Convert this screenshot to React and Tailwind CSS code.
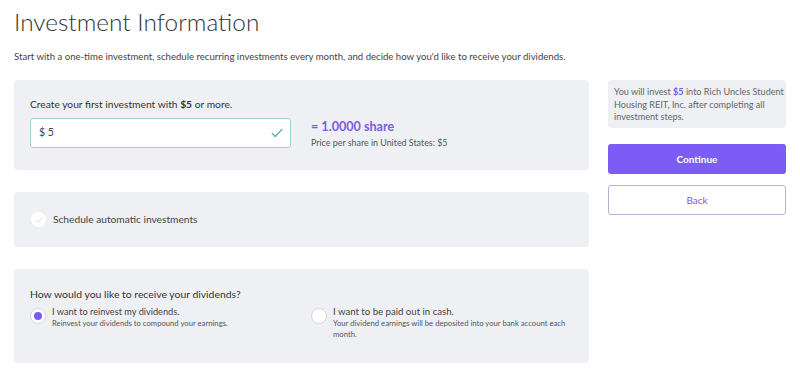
import React, { useState } from 'react';

const Check = ({ className }) => (
    <svg viewBox="0 0 16 16" className={className} fill="none" stroke="currentColor" strokeWidth="1.4" strokeLinecap="round" strokeLinejoin="round">
        <path d="M2.5 8.5l3.5 3.5 7.5-8" />
    </svg>
);

const App = () => {
    const [amount, setAmount] = useState('$ 5');
    const [payout, setPayout] = useState('reinvest');

    return (
        <div className="w-[800px] h-[377px] bg-white text-[#3b3b3b] overflow-hidden" style={{ fontFamily: 'Lato, "Open Sans", sans-serif' }}>
            <div className="pl-[14px] pt-[6px]">
                <h1 className="text-[24.4px] font-light leading-[32px] text-[#333]">Investment Information</h1>
                <p className="mt-[12px] text-[9.6px] leading-[14px] text-[#444]">
                    Start with a one-time investment, schedule recurring investments every month, and decide how you'd like to receive your dividends.
                </p>
            </div>

            <div className="flex gap-[19px] pl-[14px] mt-[16px]">
                <div className="w-[575px] flex flex-col gap-[22px]">
                    <div className="bg-[#eef0f4] rounded-[4px] h-[90px] pl-[16px] pt-[17px] flex gap-[20px]">
                        <div>
                            <div className="text-[10.25px] leading-[14px] text-[#333]">
                                Create your first investment with <span className="font-bold">$5</span> or more.
                            </div>
                            <div className="mt-[7px] w-[261px] h-[30px] bg-white border border-[#9fd0d6] rounded-[3px] flex items-center pl-[8px] pr-[6px]">
                                <input
                                    className="flex-1 outline-none text-[10.5px] text-[#444] bg-transparent"
                                    value={amount}
                                    onChange={(e) => setAmount(e.target.value)}
                                />
                                <Check className="w-[14px] h-[14px] text-[#4fb0b8]" />
                            </div>
                        </div>
                        <div className="pt-[22px]">
                            <div className="text-[12.6px] font-bold leading-[16px] text-[#7a5ce0]">= 1.0000 share</div>
                            <div className="mt-[2px] text-[8.9px] leading-[12px] text-[#555]">Price per share in United States: $5</div>
                        </div>
                    </div>

                    <div className="bg-[#eef0f4] rounded-[4px] h-[55px] pl-[17px] flex items-center gap-[7px]">
                        <div className="w-[15px] h-[15px] rounded-full bg-white flex items-center justify-center">
                            <Check className="w-[10px] h-[10px] text-[#d6d8dc]" />
                        </div>
                        <span className="text-[10.2px] text-[#444]">Schedule automatic investments</span>
                    </div>

                    <div className="bg-[#eef0f4] rounded-[4px] h-[94px] pl-[16px] pt-[18px]">
                        <div className="text-[10.4px] leading-[14px] text-[#333]">How would you like to receive your dividends?</div>
                        <div className="mt-[4px] flex">
                            <button onClick={() => setPayout('reinvest')} className="w-[281px] flex items-start gap-[6px] text-left">
                                <span className="mt-[3px] w-[16px] h-[16px] rounded-full bg-white border border-[#d5d5e0] flex items-center justify-center shrink-0">
                                    {payout === 'reinvest' && <span className="w-[8px] h-[8px] rounded-full bg-[#7b5cf0]" />}
                                </span>
                                <span>
                                    <span className="block text-[9.2px] leading-[13px] text-[#444]">I want to reinvest my dividends.</span>
                                    <span className="block text-[7.7px] leading-[11px] text-[#555]">Reinvest your dividends to compound your earnings.</span>
                                </span>
                            </button>
                            <button onClick={() => setPayout('cash')} className="flex items-start gap-[6px] text-left">
                                <span className="mt-[3px] w-[16px] h-[16px] rounded-full bg-white border border-[#d5d5e0] flex items-center justify-center shrink-0">
                                    {payout === 'cash' && <span className="w-[8px] h-[8px] rounded-full bg-[#7b5cf0]" />}
                                </span>
                                <span className="w-[240px]">
                                    <span className="block text-[9.6px] leading-[13px] text-[#444]">I want to be paid out in cash.</span>
                                    <span className="block text-[7.7px] leading-[11px] text-[#555]">Your dividend earnings will be deposited into your bank account each month.</span>
                                </span>
                            </button>
                        </div>
                    </div>
                </div>

                <div className="w-[178px] flex flex-col">
                    <p className="bg-[#eef0f4] rounded-[4px] h-[48px] pl-[6px] pr-[1px] pt-[6px] text-[9.1px] leading-[12.5px] text-[#666]">
                        You will invest <b className="text-[#7a5ce0]">$5</b> into Rich Uncles Student Housing REIT, Inc. after completing all investment steps.
                    </p>
                    <button className="mt-[16px] h-[30px] rounded-[3px] bg-[#7b5cf5] text-white text-[10px] font-bold">Continue</button>
                    <button className="mt-[11px] h-[30px] rounded-[3px] bg-white border border-[#b9b0d8] text-[#7a5ce0] text-[10px]">Back</button>
                </div>
            </div>
        </div>
    );
};

export default App;
